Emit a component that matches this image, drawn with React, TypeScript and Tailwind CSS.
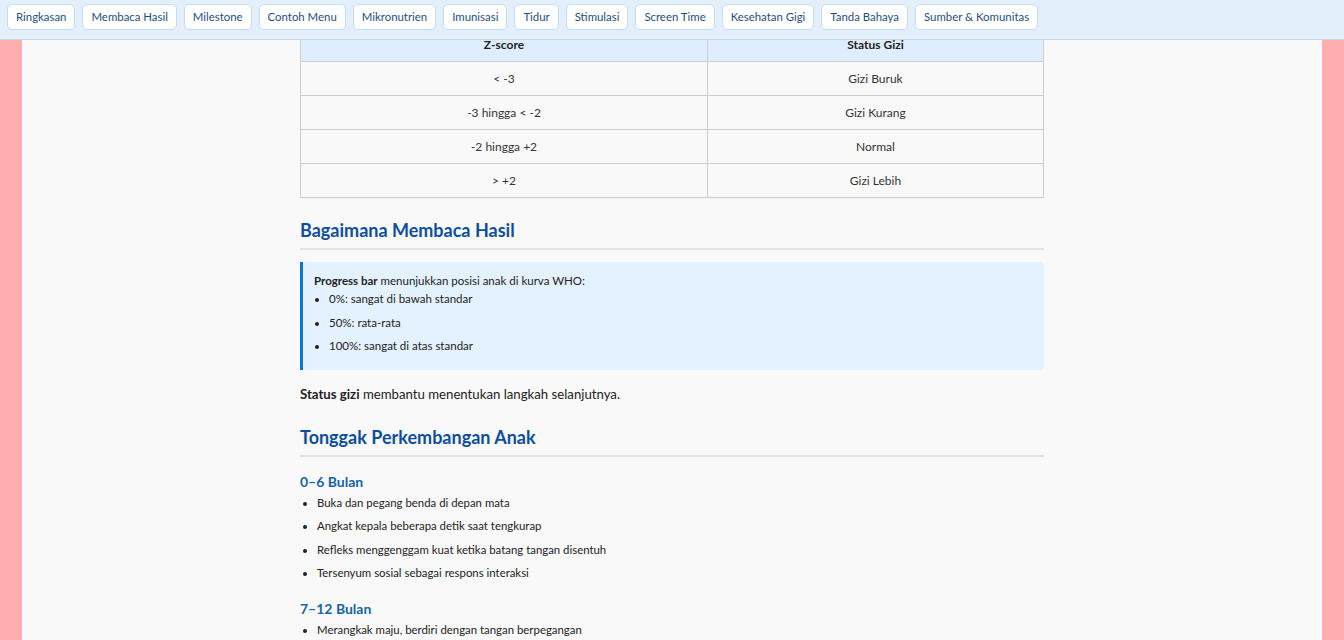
import React from 'react';

const navItems = [
  'Ringkasan',
  'Membaca Hasil',
  'Milestone',
  'Contoh Menu',
  'Mikronutrien',
  'Imunisasi',
  'Tidur',
  'Stimulasi',
  'Screen Time',
  'Kesehatan Gigi',
  'Tanda Bahaya',
  'Sumber & Komunitas',
];

const zRows = [
  ['< -3', 'Gizi Buruk'],
  ['-3 hingga < -2', 'Gizi Kurang'],
  ['-2 hingga +2', 'Normal'],
  ['> +2', 'Gizi Lebih'],
];

const milestones = [
  {
    title: '0–6 Bulan',
    items: [
      'Buka dan pegang benda di depan mata',
      'Angkat kepala beberapa detik saat tengkurap',
      'Refleks menggenggam kuat ketika batang tangan disentuh',
      'Tersenyum sosial sebagai respons interaksi',
    ],
  },
  {
    title: '7–12 Bulan',
    items: ['Merangkak maju, berdiri dengan tangan berpegangan'],
  },
];

export default function App() {
  return (
    <div className="h-[640px] overflow-hidden bg-[#ffadad] px-[22px] font-['Lato','Open_Sans',sans-serif] text-[#222]">
      {/* Top nav over the content */}
      <nav className="fixed left-0 right-0 top-0 z-10 flex h-[40px] items-start gap-[7px] border-b border-[#c9d3dc] bg-[#e3f0fc] px-[7px] pt-[4px]">
        {navItems.map((item) => (
          <button
            key={item}
            className="h-[26px] rounded-[5px] border border-[#c3dcf3] bg-white px-[8px] text-[11.4px] text-[#1b4f82]"
          >
            {item}
          </button>
        ))}
      </nav>

      <main className="h-full bg-[#f9f9f9] pt-[28px]">
        <div className="ml-[278px] w-[744px]">
          <table className="w-full border-collapse text-[12px] text-[#333]">
            <thead>
              <tr className="h-[33px] bg-[#dfeefe]">
                <th className="w-[407px] border border-[#cccccc] font-bold text-[#222]">Z-score</th>
                <th className="border border-[#cccccc] font-bold text-[#222]">Status Gizi</th>
              </tr>
            </thead>
            <tbody>
              {zRows.map(([z, s]) => (
                <tr key={z} className="h-[34px]">
                  <td className="border border-[#cccccc] text-center">{z}</td>
                  <td className="border border-[#cccccc] text-center">{s}</td>
                </tr>
              ))}
            </tbody>
          </table>

          <h2 className="mt-[20px] border-b-2 border-[#e2e2e2] pb-[6px] text-[18px] font-bold leading-[24px] text-[#0d4f9e]">
            Bagaimana Membaca Hasil
          </h2>

          <div className="mt-[12px] rounded-r-[4px] border-l-[3px] border-[#0b74d4] bg-[#e4f1ff] pb-[12px] pl-[11px] pr-4 pt-[11px] text-[11.5px]">
            <p className="leading-[16px]">
              <strong>Progress bar</strong> menunjukkan posisi anak di kurva WHO:
            </p>
            <ul className="-mt-[2px] list-disc pl-[15px]">
              <li className="leading-[23.5px]">0%: sangat di bawah standar</li>
              <li className="leading-[23.5px]">50%: rata-rata</li>
              <li className="leading-[23.5px]">100%: sangat di atas standar</li>
            </ul>
          </div>

          <p className="mt-[14px] text-[13.2px] leading-[20px]">
            <strong>Status gizi</strong> membantu menentukan langkah selanjutnya.
          </p>

          <h2 className="mt-[21px] border-b-2 border-[#e2e2e2] pb-[6px] text-[18px] font-bold leading-[24px] text-[#0d4f9e]">
            Tonggak Perkembangan Anak
          </h2>

          {milestones.map((m, i) => (
            <section key={m.title} className={i === 0 ? 'mt-[15px]' : 'mt-[14px]'}>
              <h3 className="text-[14px] font-bold leading-[20px] text-[#1565a8]">{m.title}</h3>
              <ul className="-mt-[1px] list-disc pl-[17px] text-[11.4px]">
                {m.items.map((it) => (
                  <li key={it} className="leading-[23.5px]">
                    {it}
                  </li>
                ))}
              </ul>
            </section>
          ))}
        </div>
      </main>
    </div>
  );
}
